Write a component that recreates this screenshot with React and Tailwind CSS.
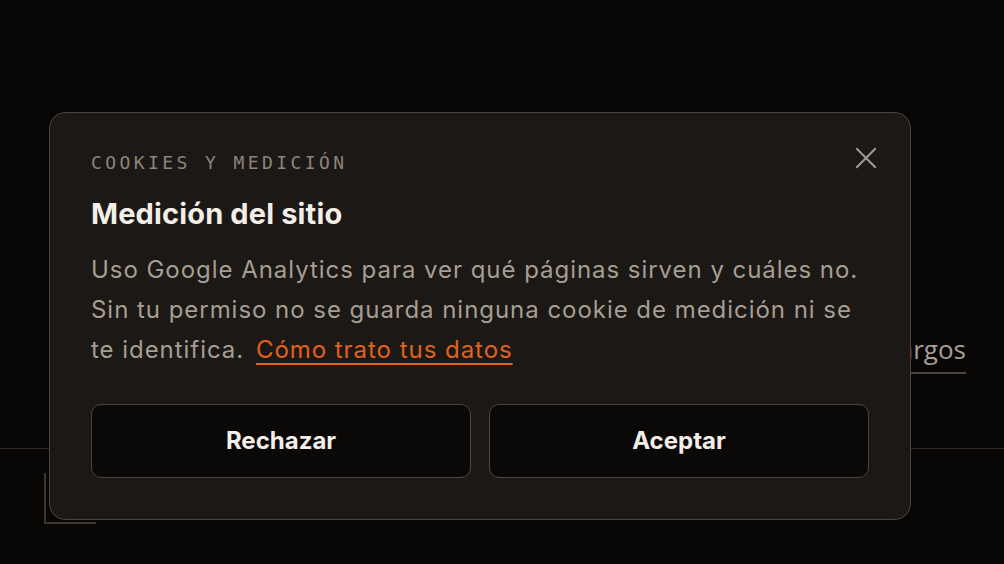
import React from 'react';

const CloseIcon = () => (
  <svg width="22" height="22" viewBox="0 0 22 22" fill="none" stroke="currentColor" strokeWidth="2" strokeLinecap="square">
    <path d="M2 2 L20 20 M20 2 L2 20" />
  </svg>
);

const CookieDialog = () => (
  <div className="fixed inset-0 pt-[112px] pl-[49px]">
    <div className="w-[862px] h-[408px] rounded-[16px] border-[1.5px] border-[#4c453d] bg-[#1c1815] px-[41px] pt-[38px] pb-[41px] flex flex-col">
      <div className="flex items-start justify-between">
        <p className="font-['DejaVu_Sans_Mono',monospace] text-[18px] tracking-[0.19em] text-[#8d847a] leading-[24px]">
          COOKIES Y MEDICIÓN
        </p>
        <button className="text-[#a39a8f] mt-[-4px] mr-[-8px]">
          <CloseIcon />
        </button>
      </div>
      <h2 className="mt-[22px] font-['Inter',sans-serif] font-bold text-[29px] leading-[34px] text-[#f3eee7] tracking-[0.005em]">
        Medición del sitio
      </h2>
      <p className="mt-[19px] font-['Inter',sans-serif] text-[24px] leading-[40px] tracking-[0.04em] text-[#a69e93]">
        Uso Google Analytics para ver qué páginas sirven y cuáles no.<br />
        Sin tu permiso no se guarda ninguna cookie de medición ni se<br />
        te identifica.{' '}
        <a href="#" className="ml-[4px] text-[#e2621b] underline decoration-[2px] underline-offset-[5px]">
          Cómo trato tus datos
        </a>
      </p>
      <div className="mt-auto grid grid-cols-2 gap-[18px]">
        <button className="h-[74px] rounded-[10px] border-[1.5px] border-[#4c453d] bg-[#0b0908] font-['Inter',sans-serif] font-bold text-[24px] text-[#f3eee7]">
          Rechazar
        </button>
        <button className="h-[74px] rounded-[10px] border-[1.5px] border-[#4c453d] bg-[#0b0908] font-['Inter',sans-serif] font-bold text-[24px] text-[#f3eee7]">
          Aceptar
        </button>
      </div>
    </div>
  </div>
);

export default function App() {
  return (
    <div className="w-[1004px] h-[564px] overflow-hidden bg-[#080706] flex flex-col">
      <div className="flex justify-end pr-[38px] pt-[332px]">
        <a href="#" className="font-['Open_Sans',sans-serif] text-[26px] leading-[34px] text-[#a79f95] border-b-2 border-[#4a443e] pb-[6px]">
          Cargos
        </a>
      </div>
      <div className="mt-[74px] border-t border-[#2e2a26]" />
      <div className="ml-[44px] mt-[24px] w-[52px] h-[51px] border-l-2 border-b-2 border-[#3a3632]" />
      <CookieDialog />
    </div>
  );
}
